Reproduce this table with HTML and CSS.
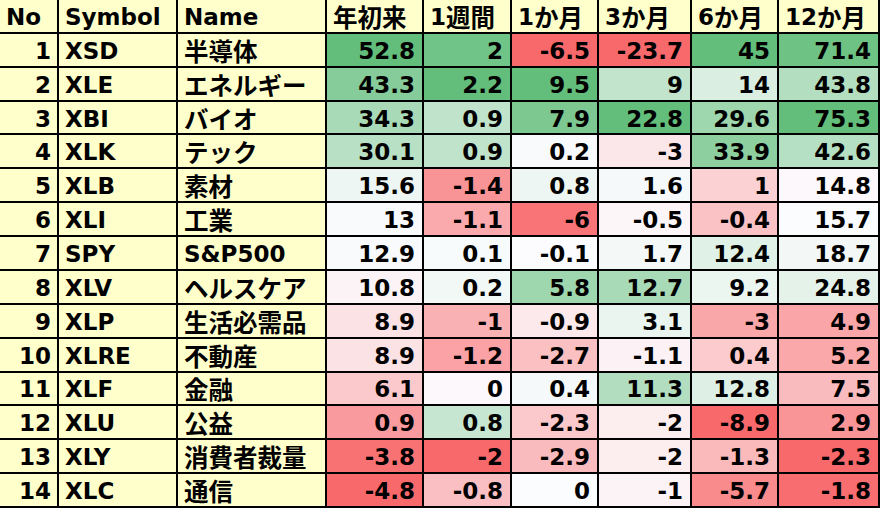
FILE: index.html
```html
<!DOCTYPE html>
<html lang="ja">
<head>
<meta charset="utf-8">
<link rel="stylesheet" href="styles.css">
</head>
<body>
<div class="sheet" id="sheet">
  <div class="cell hd num">No</div><div class="cell hd">Symbol</div><div class="cell hd">Name</div><div class="cell hd"><span class="ja">年初来</span></div><div class="cell hd">1<span class="ja">週間</span></div><div class="cell hd">1<span class="ja">か月</span></div><div class="cell hd">3<span class="ja">か月</span></div><div class="cell hd">6<span class="ja">か月</span></div><div class="cell hd">12<span class="ja">か月</span></div>

  <div class="cell lab num">1</div><div class="cell lab">XSD</div><div class="cell lab"><span class="ja">半導体</span></div><div class="cell v">52.8</div><div class="cell v">2</div><div class="cell v">-6.5</div><div class="cell v">-23.7</div><div class="cell v">45</div><div class="cell v">71.4</div>
  <div class="cell lab num">2</div><div class="cell lab">XLE</div><div class="cell lab"><span class="ja">エネルギー</span></div><div class="cell v">43.3</div><div class="cell v">2.2</div><div class="cell v">9.5</div><div class="cell v">9</div><div class="cell v">14</div><div class="cell v">43.8</div>
  <div class="cell lab num">3</div><div class="cell lab">XBI</div><div class="cell lab"><span class="ja">バイオ</span></div><div class="cell v">34.3</div><div class="cell v">0.9</div><div class="cell v">7.9</div><div class="cell v">22.8</div><div class="cell v">29.6</div><div class="cell v">75.3</div>
  <div class="cell lab num">4</div><div class="cell lab">XLK</div><div class="cell lab"><span class="ja">テック</span></div><div class="cell v">30.1</div><div class="cell v">0.9</div><div class="cell v">0.2</div><div class="cell v">-3</div><div class="cell v">33.9</div><div class="cell v">42.6</div>
  <div class="cell lab num">5</div><div class="cell lab">XLB</div><div class="cell lab"><span class="ja">素材</span></div><div class="cell v">15.6</div><div class="cell v">-1.4</div><div class="cell v">0.8</div><div class="cell v">1.6</div><div class="cell v">1</div><div class="cell v">14.8</div>
  <div class="cell lab num">6</div><div class="cell lab">XLI</div><div class="cell lab"><span class="ja">工業</span></div><div class="cell v">13</div><div class="cell v">-1.1</div><div class="cell v">-6</div><div class="cell v">-0.5</div><div class="cell v">-0.4</div><div class="cell v">15.7</div>
  <div class="cell lab num">7</div><div class="cell lab">SPY</div><div class="cell lab">S&amp;P500</div><div class="cell v">12.9</div><div class="cell v">0.1</div><div class="cell v">-0.1</div><div class="cell v">1.7</div><div class="cell v">12.4</div><div class="cell v">18.7</div>
  <div class="cell lab num">8</div><div class="cell lab">XLV</div><div class="cell lab"><span class="ja">ヘルスケア</span></div><div class="cell v">10.8</div><div class="cell v">0.2</div><div class="cell v">5.8</div><div class="cell v">12.7</div><div class="cell v">9.2</div><div class="cell v">24.8</div>
  <div class="cell lab num">9</div><div class="cell lab">XLP</div><div class="cell lab"><span class="ja">生活必需品</span></div><div class="cell v">8.9</div><div class="cell v">-1</div><div class="cell v">-0.9</div><div class="cell v">3.1</div><div class="cell v">-3</div><div class="cell v">4.9</div>
  <div class="cell lab num">10</div><div class="cell lab">XLRE</div><div class="cell lab"><span class="ja">不動産</span></div><div class="cell v">8.9</div><div class="cell v">-1.2</div><div class="cell v">-2.7</div><div class="cell v">-1.1</div><div class="cell v">0.4</div><div class="cell v">5.2</div>
  <div class="cell lab num">11</div><div class="cell lab">XLF</div><div class="cell lab"><span class="ja">金融</span></div><div class="cell v">6.1</div><div class="cell v">0</div><div class="cell v">0.4</div><div class="cell v">11.3</div><div class="cell v">12.8</div><div class="cell v">7.5</div>
  <div class="cell lab num">12</div><div class="cell lab">XLU</div><div class="cell lab"><span class="ja">公益</span></div><div class="cell v">0.9</div><div class="cell v">0.8</div><div class="cell v">-2.3</div><div class="cell v">-2</div><div class="cell v">-8.9</div><div class="cell v">2.9</div>
  <div class="cell lab num">13</div><div class="cell lab">XLY</div><div class="cell lab"><span class="ja">消費者裁量</span></div><div class="cell v">-3.8</div><div class="cell v">-2</div><div class="cell v">-2.9</div><div class="cell v">-2</div><div class="cell v">-1.3</div><div class="cell v">-2.3</div>
  <div class="cell lab num">14</div><div class="cell lab">XLC</div><div class="cell lab"><span class="ja">通信</span></div><div class="cell v">-4.8</div><div class="cell v">-0.8</div><div class="cell v">0</div><div class="cell v">-1</div><div class="cell v">-5.7</div><div class="cell v">-1.8</div>
</div>
<script src="script.js"></script>
</body>
</html>
```
FILE: styles.css
```css
html, body {
  margin: 0;
  padding: 0;
  background: #ffffff;
}

.sheet {
  display: grid;
  grid-template-columns: 57px 117px 147px 95px 86px 85px 91px 85px 99px;
  grid-template-rows: repeat(15, 1fr);
  gap: 2px;
  width: 878px;
  height: 506px;
  background: #000000;
  border-right: 2px solid #000000;
  border-bottom: 2px solid #000000;
  font-family: "DejaVu Sans", "Noto Sans CJK JP", sans-serif;
  font-weight: bold;
  font-size: 23px;
  line-height: 28px;
  color: #000000;
}

.cell {
  display: flex;
  align-items: center;
  padding: 2px 6px 0 6px;
  white-space: nowrap;
  background: #fcfcff;
}

.ja {
  font-family: "Noto Sans CJK JP", sans-serif;
  font-size: 24.5px;
}

.hd, .lab {
  background: #ffffcc;
}

.num, .v {
  justify-content: flex-end;
}

.hd.num {
  justify-content: flex-start;
}

.v {
  padding-right: 7px;
}
```
FILE: script.js
```js
(function () {
  var cells = document.querySelectorAll('#sheet .cell');
  var cols = 9, rows = cells.length / cols;
  var red = [248, 105, 107], white = [252, 252, 255], green = [99, 190, 123];
  function mix(a, b, t) {
    return 'rgb(' + a.map(function (x, i) { return Math.round(x + (b[i] - x) * t); }).join(',') + ')';
  }
  for (var c = 3; c < cols; c++) {
    var list = [];
    for (var r = 1; r < rows; r++) list.push({ el: cells[r * cols + c], v: parseFloat(cells[r * cols + c].textContent) });
    var s = list.map(function (o) { return o.v; }).sort(function (a, b) { return a - b; });
    var min = s[0], max = s[s.length - 1];
    var k = 0.5 * (s.length - 1), lo = Math.floor(k), mid = s[lo] + (s[Math.ceil(k)] - s[lo]) * (k - lo);
    list.forEach(function (o) {
      var col;
      if (o.v <= mid) col = mix(red, white, mid === min ? 1 : (o.v - min) / (mid - min));
      else col = mix(white, green, (o.v - mid) / (max - mid));
      o.el.style.background = col;
    });
  }
})();
```
